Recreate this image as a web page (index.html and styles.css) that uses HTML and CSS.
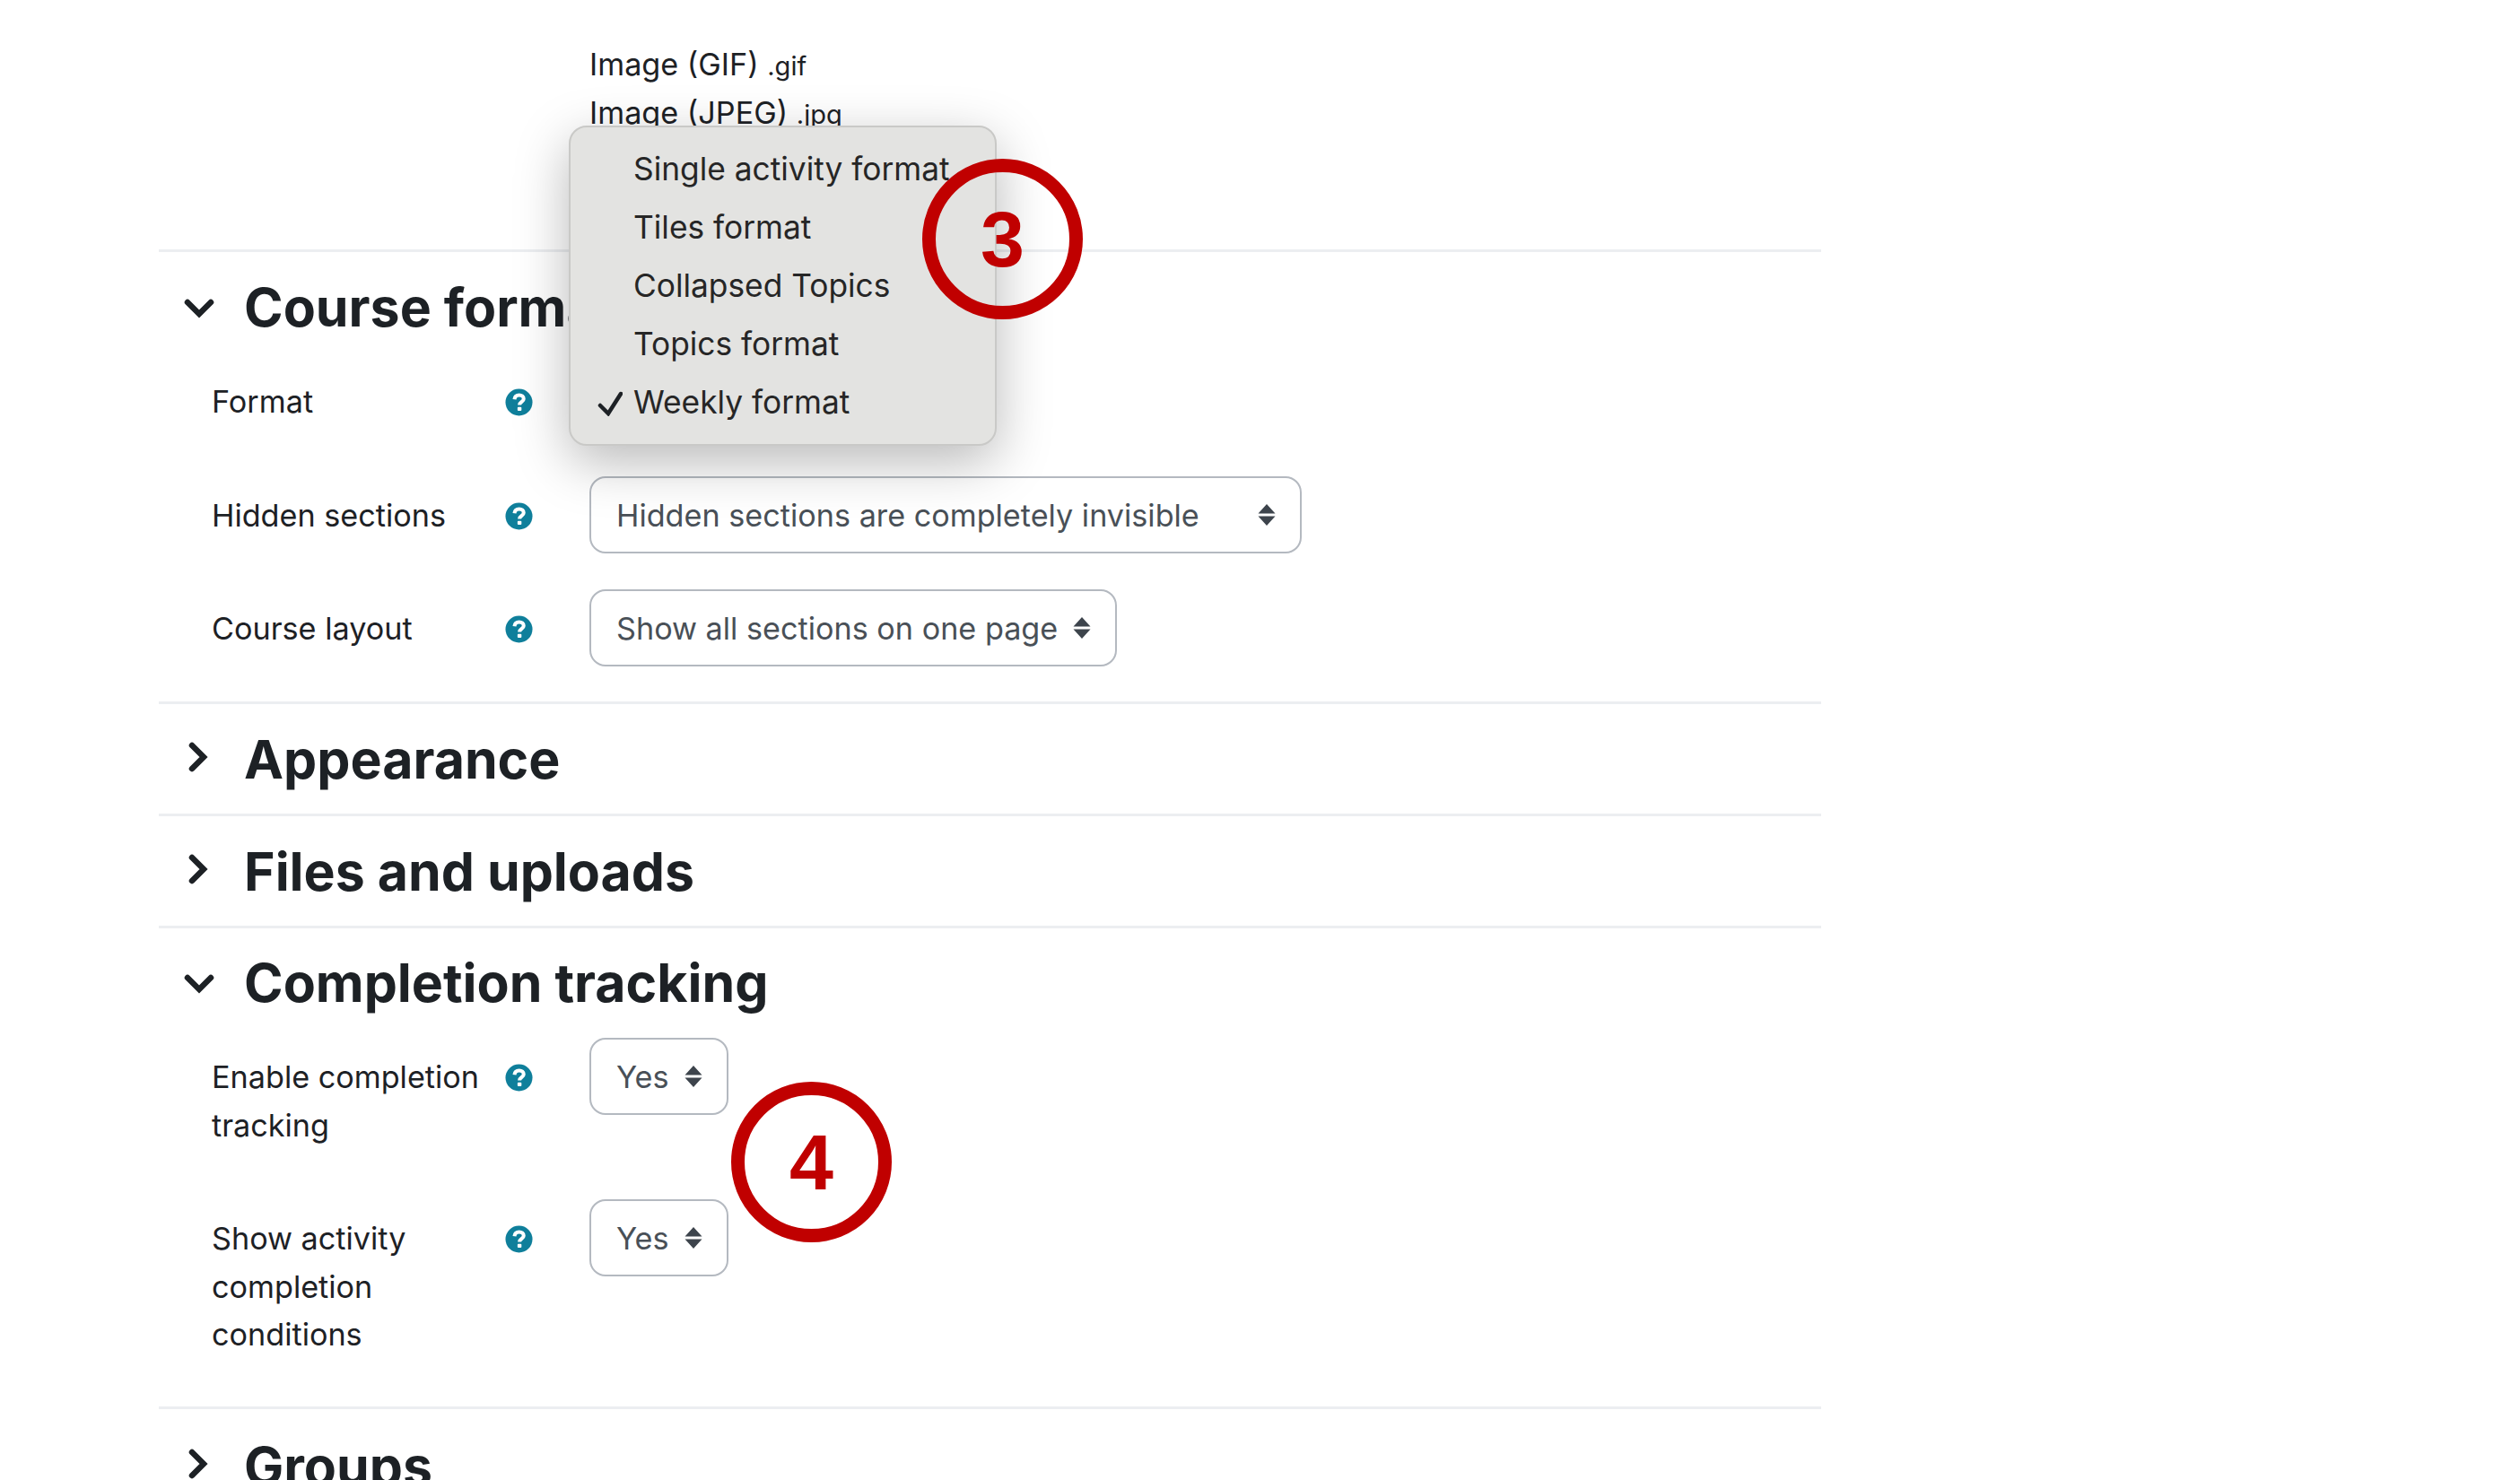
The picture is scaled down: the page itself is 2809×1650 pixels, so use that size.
FILE: index.html
```html
<!DOCTYPE html>
<html lang="en">
<head>
    <meta charset="UTF-8">
    <title>Course settings</title>
    <link rel="stylesheet" href="styles.css">
</head>
<body>
    <svg class="defs" width="0" height="0">
        <symbol id="icon-help" viewBox="0 0 32 32">
            <circle cx="16" cy="16" r="15.5" fill="#0f7f9b"/>
            <path d="M10.800 12.600c.3-3.200 2.500-4.900 5.400-4.900 3 0 5.200 1.800 5.200 4.400 0 3.500-4.800 3.700-4.800 6.900" fill="none" stroke="#fff" stroke-width="4.200"/>
            <rect x="14.300" y="21.400" width="4.600" height="4.400" rx="1" fill="#fff"/>
        </symbol>
        <symbol id="icon-sort" viewBox="0 0 20 26">
            <path d="M10 1 19.500 11.500H.5Z M10 25 .5 14.500H19.500Z" fill="#3d444c"/>
        </symbol>
        <symbol id="icon-down" viewBox="0 0 36 24">
            <path d="M5 6 18 19 31 6" fill="none" stroke="#1d2125" stroke-width="6.500" stroke-linecap="round"/>
        </symbol>
        <symbol id="icon-right" viewBox="0 0 24 36">
            <path d="M6 5 19 18 6 31" fill="none" stroke="#1d2125" stroke-width="6.500" stroke-linecap="round"/>
        </symbol>
    </svg>

    <div class="filetypes">
        <div>Image (GIF) <small>.gif</small></div>
        <div>Image (JPEG) <small>.jpg</small></div>
    </div>

    <section class="section section-first">
        <h3 class="section-head"><svg class="chevron-down"><use href="#icon-down"/></svg>Course format</h3>
        <div class="form-row">
            <div class="form-label"><label>Format</label><svg class="help"><use href="#icon-help"/></svg></div>
            <div class="select"><span>Weekly format</span><svg class="sort"><use href="#icon-sort"/></svg></div>
        </div>
        <div class="form-row">
            <div class="form-label"><label>Hidden sections</label><svg class="help"><use href="#icon-help"/></svg></div>
            <div class="select select-wide"><span>Hidden sections are completely invisible</span><svg class="sort"><use href="#icon-sort"/></svg></div>
        </div>
        <div class="form-row">
            <div class="form-label"><label>Course layout</label><svg class="help"><use href="#icon-help"/></svg></div>
            <div class="select"><span>Show all sections on one page</span><svg class="sort"><use href="#icon-sort"/></svg></div>
        </div>
    </section>

    <section class="section section-closed">
        <h3 class="section-head"><svg class="chevron-right"><use href="#icon-right"/></svg>Appearance</h3>
    </section>

    <section class="section section-closed">
        <h3 class="section-head"><svg class="chevron-right"><use href="#icon-right"/></svg>Files and uploads</h3>
    </section>

    <section class="section">
        <h3 class="section-head"><svg class="chevron-down"><use href="#icon-down"/></svg>Completion tracking</h3>
        <div class="form-row">
            <div class="form-label"><label>Enable completion tracking</label><svg class="help"><use href="#icon-help"/></svg></div>
            <div class="select"><span>Yes</span><svg class="sort"><use href="#icon-sort"/></svg></div>
        </div>
        <div class="form-row">
            <div class="form-label"><label>Show activity completion conditions</label><svg class="help"><use href="#icon-help"/></svg></div>
            <div class="select"><span>Yes</span><svg class="sort"><use href="#icon-sort"/></svg></div>
        </div>
    </section>

    <section class="section section-closed section-last">
        <h3 class="section-head"><svg class="chevron-right"><use href="#icon-right"/></svg>Groups</h3>
    </section>

    <!-- open dropdown of the Format select -->
    <ul class="menu">
        <li>Single activity format</li>
        <li>Tiles format</li>
        <li>Collapsed Topics</li>
        <li>Topics format</li>
        <li><svg class="check" viewBox="0 0 28 28"><path d="M3 16 12 25 26 3" fill="none" stroke="#1d2125" stroke-width="4.500" stroke-linecap="round"/></svg>Weekly format</li>
    </ul>

    <div class="callout callout-3">3</div>
    <div class="callout callout-4">4</div>
</body>
</html>
```

FILE: styles.css
```css
* {
    box-sizing: border-box;
}

html, body {
    height: 1650px;
    overflow: hidden;
}

body {
    position: relative;
    margin: 0;
    padding: 0 779px 0 177px;
    background: #fff;
    color: #1d2125;
    font-family: Inter, "Liberation Sans", sans-serif;
    font-size: 34.2px;
    line-height: 53.5px;
}

.defs {
    position: absolute;
}

.filetypes {
    height: 278px;
    padding: 46px 0 0 480px;
    line-height: 52px;
}

.filetypes small {
    font-size: 29px;
}

.section {
    border-top: 3px solid #eceef1;
    padding-top: 26px;
}

.section-first {
    padding-top: 27px;
}

.section-closed {
    padding: 27px 0 25px;
}

.section-last {
    padding-top: 29px;
}

.section-head {
    display: flex;
    align-items: center;
    height: 70px;
    margin: 0 0 26px;
    font-size: 59px;
    line-height: 70px;
    font-weight: 700;
}

.section-closed .section-head {
    margin-bottom: 0;
}

.chevron-down {
    flex: none;
    width: 36px;
    height: 24px;
    margin: 0 32px 0 27px;
}

.chevron-right {
    flex: none;
    width: 24px;
    height: 36px;
    margin: -6px 40px 0 31px;
}

.form-row {
    display: flex;
    align-items: flex-start;
    margin-bottom: 40px;
}

.form-row:last-child {
    margin-bottom: 39px;
}

.form-label {
    display: flex;
    justify-content: space-between;
    align-items: flex-start;
    flex: none;
    width: 480px;
    padding: 17px 63px 16px 59px;
}

.form-row:last-child .form-label {
    padding-bottom: 14.5px;
}

.form-label label {
    width: 310px;
}

.help {
    flex: none;
    width: 31px;
    height: 31px;
    margin-top: 12px;
}

.select {
    display: flex;
    align-items: center;
    justify-content: space-between;
    gap: 17px;
    height: 86px;
    padding: 2px 27px 0 28px;
    border: 2px solid #b4b9c0;
    border-radius: 18px;
    color: #495057;
}

.select-wide {
    width: 794px;
}

.sort {
    flex: none;
    width: 20px;
    height: 26px;
    margin-top: -2px;
}

.menu {
    position: absolute;
    left: 634px;
    top: 140px;
    width: 477px;
    margin: 0;
    padding: 14px 0;
    list-style: none;
    background: #e3e3e1;
    border: 2px solid #c9c9c7;
    border-radius: 20px;
    box-shadow: 0 18px 60px rgba(0, 0, 0, 0.28);
    color: #262626;
    font-size: 35.3px;
}

.menu li {
    position: relative;
    height: 65px;
    padding-left: 70px;
    line-height: 65px;
}

.check {
    position: absolute;
    left: 30px;
    top: 20px;
    width: 28px;
    height: 28px;
}

.callout {
    position: absolute;
    display: flex;
    align-items: center;
    justify-content: center;
    width: 179px;
    height: 179px;
    border: 15px solid #c00000;
    border-radius: 50%;
    color: #c00000;
    font-family: "Liberation Sans", Arial, sans-serif;
    font-size: 88px;
    font-weight: 700;
    line-height: 1;
}

.callout-3 {
    left: 1028px;
    top: 177px;
}

.callout-4 {
    left: 815px;
    top: 1206px;
}
```
